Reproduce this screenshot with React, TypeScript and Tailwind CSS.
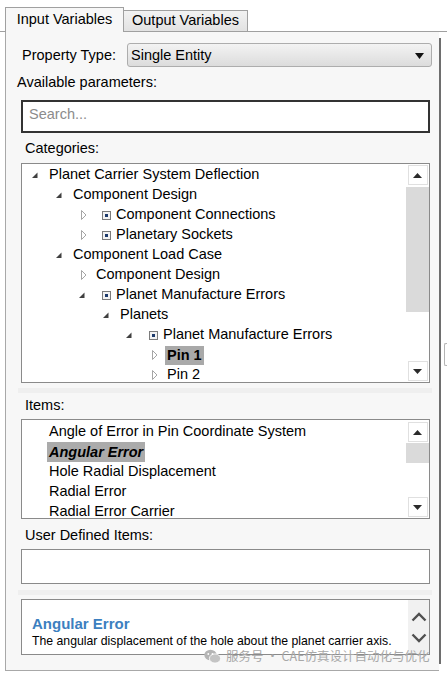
import React from "react";

const FONT = "font-['Liberation_Sans',Arial,sans-serif]";

type Node = { pl: string; exp: boolean; box?: boolean; text: string; sel?: boolean };

const tree: Node[] = [
  { pl: "pl-[7px]", exp: true, text: "Planet Carrier System Deflection" },
  { pl: "pl-[31px]", exp: true, text: "Component Design" },
  { pl: "pl-[54px]", exp: false, box: true, text: "Component Connections" },
  { pl: "pl-[54px]", exp: false, box: true, text: "Planetary Sockets" },
  { pl: "pl-[31px]", exp: true, text: "Component Load Case" },
  { pl: "pl-[54px]", exp: false, text: "Component Design" },
  { pl: "pl-[54px]", exp: true, box: true, text: "Planet Manufacture Errors" },
  { pl: "pl-[78px]", exp: true, text: "Planets" },
  { pl: "pl-[101px]", exp: true, box: true, text: "Planet Manufacture Errors" },
  { pl: "pl-[125px]", exp: false, text: "Pin 1", sel: true },
  { pl: "pl-[125px]", exp: false, text: "Pin 2" },
];

const items = [
  "Angle of Error in Pin Coordinate System",
  "Angular Error",
  "Hole Radial Displacement",
  "Radial Error",
  "Radial Error Carrier",
];

function ExpArrow() {
  return (
    <svg width="16" height="10" viewBox="0 0 16 10">
      <polygon points="8.5,2.5 8.5,8 3,8" fill="#404040" />
    </svg>
  );
}

function ColArrow() {
  return (
    <svg width="16" height="10" viewBox="0 0 16 10">
      <polygon points="5.5,0.5 10,5 5.5,9.5" fill="none" stroke="#a5a5a5" />
    </svg>
  );
}

function BoxIcon() {
  return (
    <svg width="9" height="9" viewBox="0 0 9 9" className="ml-[6px]">
      <rect x="0.5" y="0.5" width="8" height="8" fill="#f3f3f3" stroke="#7c7c7c" />
      <rect x="3" y="3" width="3" height="3" fill="#1d3b6c" />
    </svg>
  );
}

function ScrollBtn({ dir }: { dir: "up" | "down" }) {
  return (
    <div className="w-[20px] h-[20px] border border-[#e0e0e0] bg-white flex items-center justify-center">
      <svg width="9" height="5" viewBox="0 0 9 5">
        {dir === "up" ? (
          <polygon points="0,5 9,5 4.5,0" fill="#2b2b2b" />
        ) : (
          <polygon points="0,0 9,0 4.5,5" fill="#2b2b2b" />
        )}
      </svg>
    </div>
  );
}

function Chevron({ dir }: { dir: "up" | "down" }) {
  return (
    <svg width="16" height="10" viewBox="0 0 16 10">
      <polyline
        points={dir === "up" ? "1.5,8.5 8,2 14.5,8.5" : "1.5,1.5 8,8 14.5,1.5"}
        fill="none"
        stroke="#505050"
        strokeWidth="2.4"
      />
    </svg>
  );
}

export default function App() {
  return (
    <div className={`${FONT} relative w-[447px] h-[675px] bg-white text-black text-[14.5px]`}>
      {/* Tabs */}
      <div className="flex items-end h-[32px] border-b border-[#a0a0a0]">
        <div className="ml-[5px] w-[119px] h-[25px] -mb-px relative z-10 bg-[#f7f7f7] border border-b-0 border-[#a0a0a0] flex items-center justify-center">
          Input Variables
        </div>
        <div className="w-[124px] h-[21px] border border-b-0 border-l-0 border-[#a0a0a0] bg-linear-to-b from-[#f2f2f2] to-[#e2e2e2] flex items-center justify-center">
          Output Variables
        </div>
      </div>

      <div className="flex">
        {/* Panel */}
        <div className="ml-[5px] w-[435px] h-[639px] border-l border-b border-[#a8a8a8] bg-[#f7f7f7] pl-[15px] flex flex-col">
          <div className="mt-[11px] flex items-center h-[24px]">
            <span className="ml-px w-[105px] pt-px">Property Type:</span>
            <div className="w-[305px] h-[24px] rounded-[3px] border border-[#adadad] bg-linear-to-b from-[#f3f3f3] to-[#dcdcdc] flex items-center justify-between pl-[3px] pr-[7px] pt-px">
              <span>Single Entity</span>
              <svg width="9" height="6" viewBox="0 0 9 6">
                <polygon points="0,0 9,0 4.5,6" fill="#111" />
              </svg>
            </div>
          </div>

          <div className="mt-[7px] -ml-[4px] leading-4">Available parameters:</div>

          <div className="mt-[10px] w-[409px] h-[33px] border-2 border-[#333] bg-white flex items-center pl-[6px] pb-[4px] text-[#8c8c8c]">
            Search...
          </div>

          <div className="mt-[7px] ml-[4px] leading-4">Categories:</div>

          {/* Tree */}
          <div className="mt-[7px] w-[409px] h-[220px] border border-[#8a8a8a] bg-white flex">
            <div className="flex-1 pt-px overflow-hidden">
              {tree.map((n, i) => (
                <div key={i} className={`${n.pl} h-[20px] flex items-center whitespace-nowrap`}>
                  <div className="w-[20px] flex items-center">{n.exp ? <ExpArrow /> : <ColArrow />}</div>
                  {n.box && (
                    <div className="w-[20px] flex items-center">
                      <BoxIcon />
                    </div>
                  )}
                  {n.sel ? (
                    <span className="-ml-[2px] px-[2px] bg-[#a9a9a9] font-bold leading-[19px]">{n.text}</span>
                  ) : (
                    <span>{n.text}</span>
                  )}
                </div>
              ))}
            </div>
            <div className="w-[23px] flex flex-col items-center pt-px pb-px">
              <ScrollBtn dir="up" />
              <div className="mt-[2px] h-[125px] w-full bg-[#dadada]" />
              <div className="flex-1" />
              <ScrollBtn dir="down" />
            </div>
          </div>

          <div className="mt-[5px] -ml-[3px] w-[414px] h-[5px] bg-[#efefef]" />

          <div className="mt-[4px] ml-[4px] leading-4">Items:</div>

          {/* Items */}
          <div className="mt-[6px] w-[409px] h-[100px] border border-[#8a8a8a] bg-white flex">
            <div className="flex-1 pt-[2px] pl-[27px] overflow-hidden">
              {items.map((t, i) => (
                <div key={i} className="h-[20px] flex items-center whitespace-nowrap">
                  {i === 1 ? (
                    <span className="-ml-[2px] px-[2px] bg-[#ababab] font-bold italic leading-[20px]">{t}</span>
                  ) : (
                    <span>{t}</span>
                  )}
                </div>
              ))}
            </div>
            <div className="w-[23px] flex flex-col items-center pt-[2px] pb-px">
              <ScrollBtn dir="up" />
              <div className="mt-px h-[20px] w-full bg-[#dadada]" />
              <div className="flex-1" />
              <ScrollBtn dir="down" />
            </div>
          </div>

          <div className="mt-[8px] ml-[4px] leading-4">User Defined Items:</div>

          <div className="mt-[6px] w-[409px] h-[35px] border border-[#8a8a8a] bg-white" />

          <div className="mt-[6px] -ml-[3px] w-[414px] h-[5px] bg-[#efefef]" />

          {/* Description */}
          <div className="mt-[4px] w-[409px] h-[56px] border border-[#8a8a8a] bg-white flex">
            <div className="flex-1 pl-[10px] pt-[15px] whitespace-nowrap overflow-hidden">
              <div className="text-[15px] leading-[18px] font-bold text-[#3c7fc0]">Angular Error</div>
              <div className="text-[12.25px] leading-4">
                The angular displacement of the hole about the planet carrier axis.
              </div>
            </div>
            <div className="w-[21px] bg-[#f1f1f1] flex flex-col items-center pt-[12px]">
              <Chevron dir="up" />
              <div className="mt-[11px]">
                <Chevron dir="down" />
              </div>
            </div>
          </div>
        </div>

        {/* Right splitter */}
        <div className="mt-[6px] w-[2px] h-[626px] bg-[#6e6e6e]" />
        <div className="ml-[3px] mt-[311px] w-[3px] h-[23px] border border-r-0 rounded-l-[2px] border-[#b4b4b4]" />
      </div>

      {/* Watermark */}
      <div className="absolute left-[204px] top-[648px] flex items-center gap-[5px] text-[#a8a8a8] text-[12.5px] font-['Noto_Sans_CJK_SC',sans-serif] leading-4">
        <svg width="17" height="15" viewBox="0 0 17 15">
          <ellipse cx="6.5" cy="6" rx="6.2" ry="5.3" fill="#b5b5b5" />
          <ellipse cx="11" cy="9.5" rx="5.6" ry="4.6" fill="#c4c4c4" stroke="#fff" strokeWidth="0.8" />
          <circle cx="4.3" cy="5" r="0.9" fill="#fff" />
          <circle cx="8.5" cy="5" r="0.9" fill="#fff" />
        </svg>
        <span>服务号 · CAE仿真设计自动化与优化</span>
      </div>
    </div>
  );
}
